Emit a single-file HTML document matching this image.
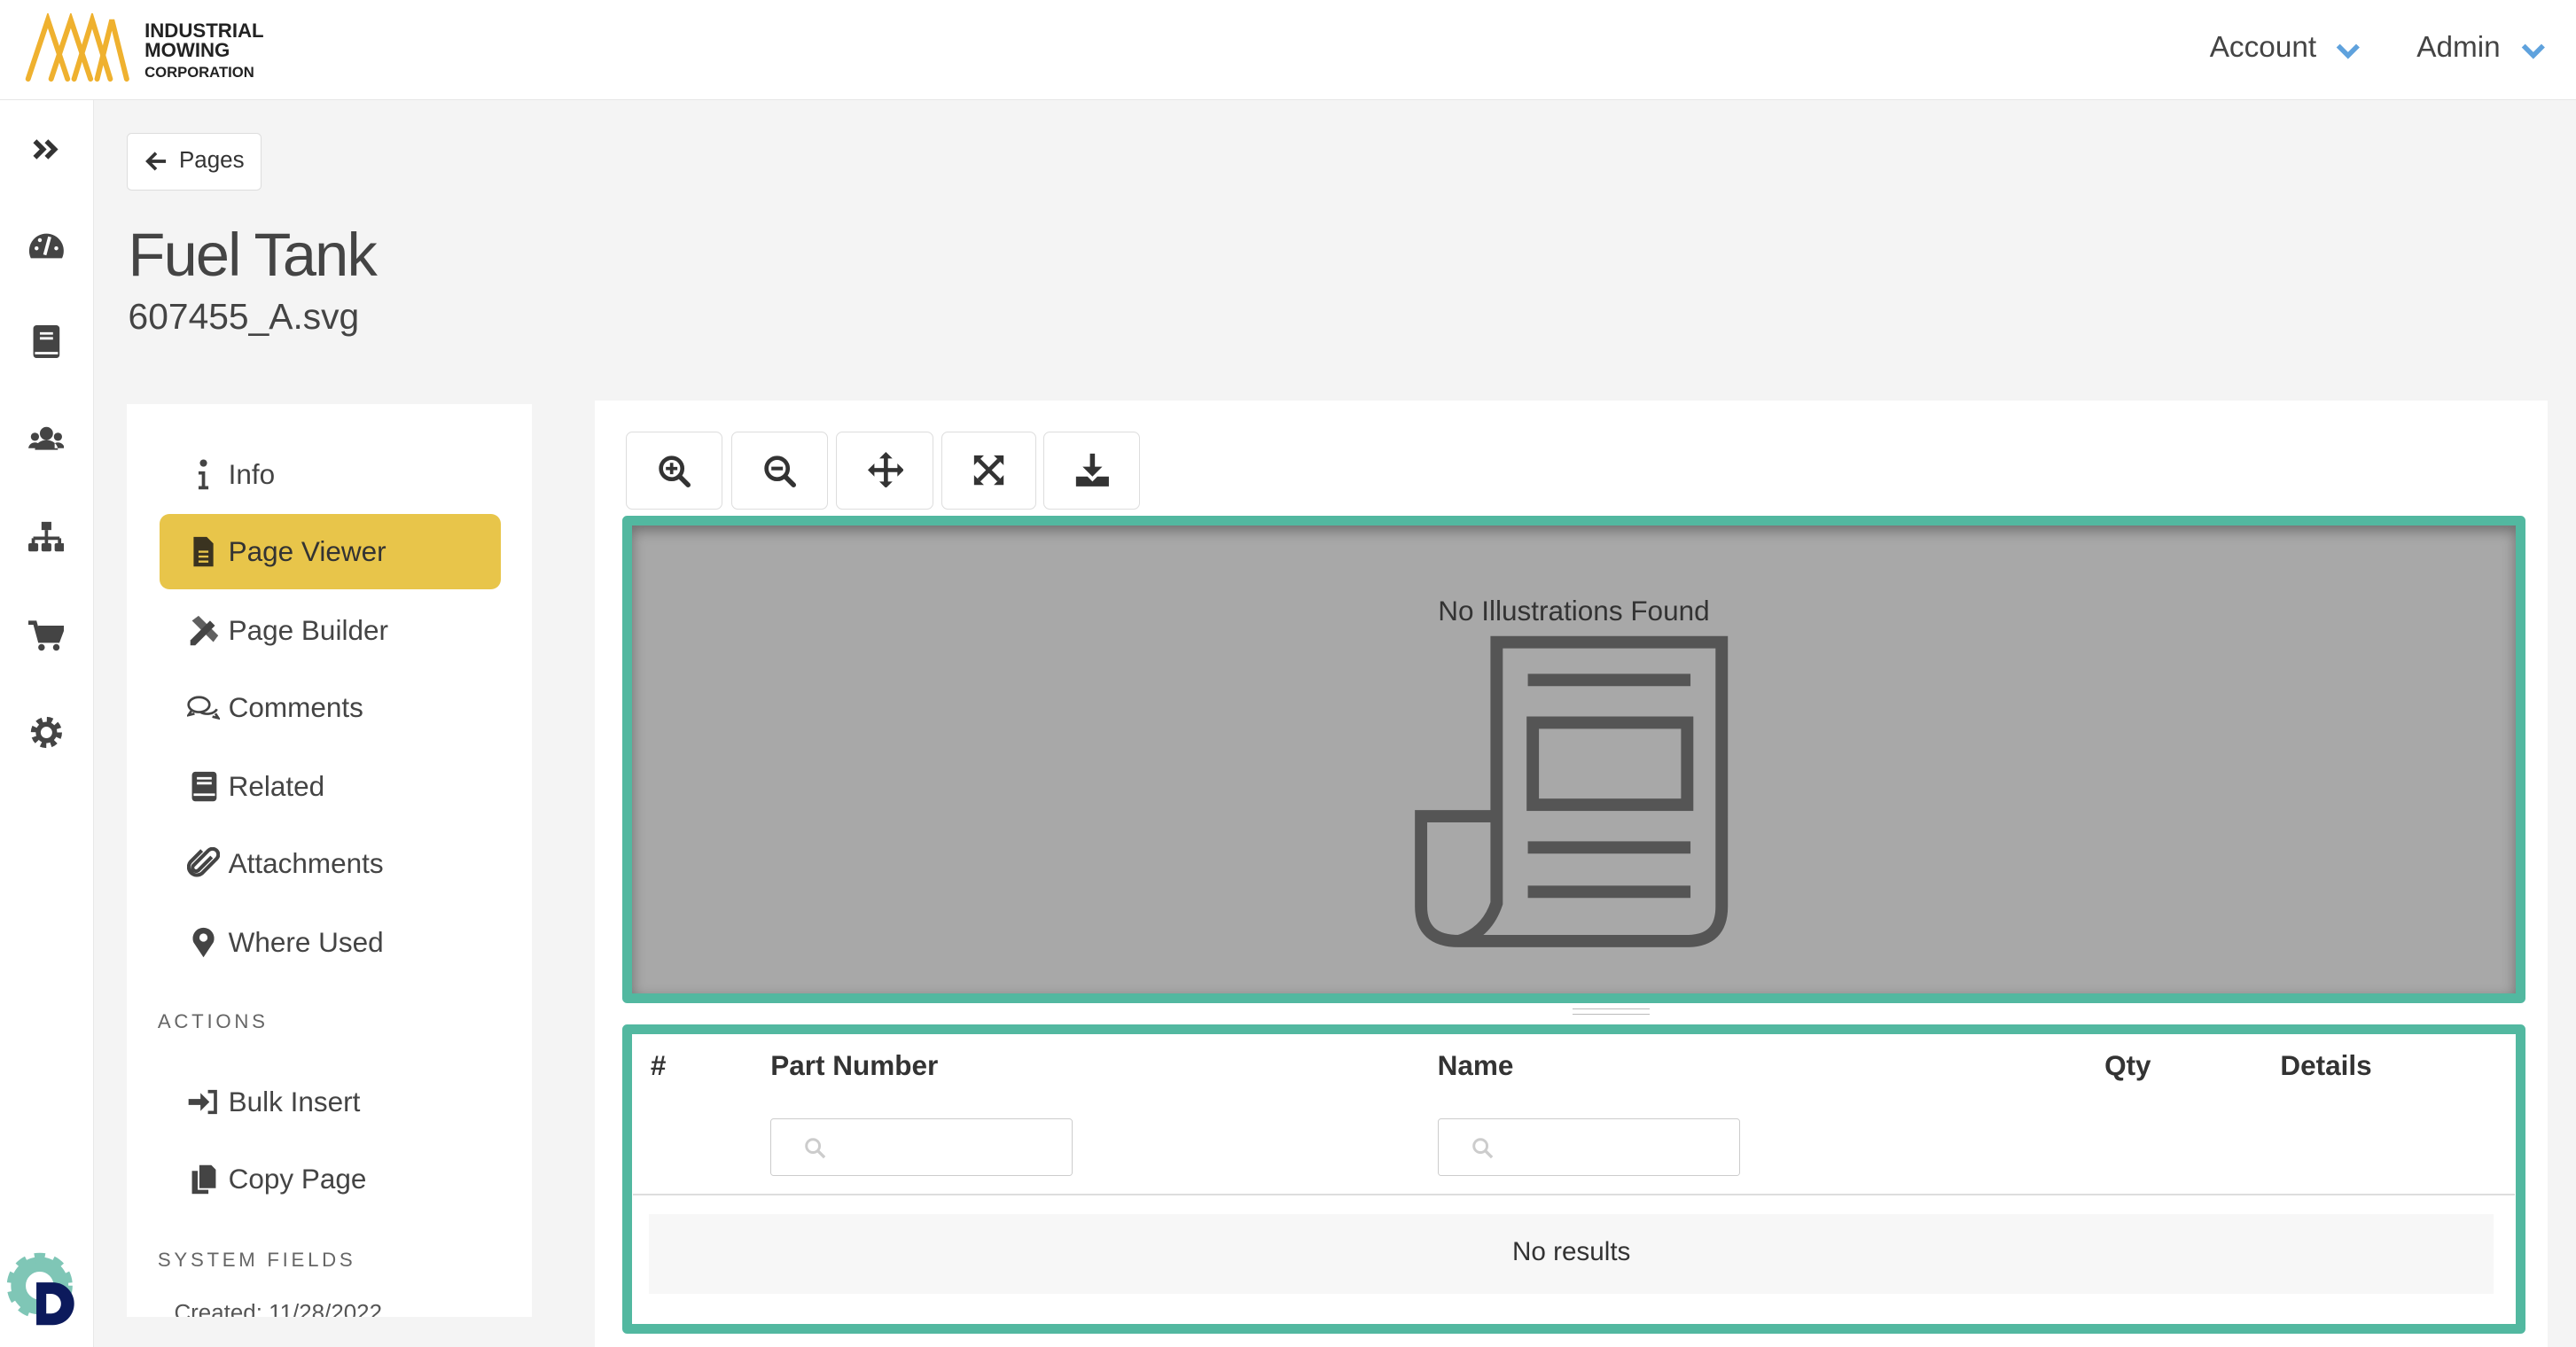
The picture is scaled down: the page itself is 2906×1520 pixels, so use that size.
<!DOCTYPE html>
<html><head><meta charset="utf-8"><style>
*{box-sizing:border-box;margin:0;padding:0}
html,body{width:2906px;height:1520px;overflow:hidden;background:#f4f4f4}
#root{zoom:1.8533;width:1568px;height:820px;position:relative;font-family:"Liberation Sans",sans-serif;color:#444;overflow:hidden}
.abs{position:absolute}
.hdr{left:0;top:0;width:1568px;height:61px;background:#fff;border-bottom:1px solid #e6e6e6}
.rail{left:0;top:61px;width:57px;height:760px;background:#fff;border-right:1px solid #e8e8e8}
.ri{position:absolute;left:17px;width:22px;height:20px}
.menu{position:absolute;left:139px;font-size:17px;color:#444}
.mi{position:absolute;left:114px;width:20px;height:20px}
.tb{position:absolute;top:263px;height:47px;border:1px solid #ddd;border-radius:4px;background:#fff}
.th{position:absolute;top:639px;font-size:17px;font-weight:bold;color:#333}
.inp{position:absolute;top:681px;width:184px;height:35px;border:1px solid #ccc;border-radius:2px;background:#fff}
</style></head><body><div id="root">
<div class="abs hdr">
 <svg class="abs" style="left:15px;top:8px" width="72" height="44" viewBox="0 0 72 44"><g stroke="#efb12f" stroke-width="3.2" fill="none" stroke-linecap="round"><path d="M2 40 L14 4 L26 40"/><path d="M16 40 L28 4 L40 40"/><path d="M30 40 L41 4 L52 40"/><path d="M44 40 L53 4 L62 40"/></g></svg>
 <div class="abs" style="left:88px;top:13px;font-size:12px;font-weight:bold;line-height:12px;color:#222">INDUSTRIAL<br>MOWING<br><span style="font-size:9px;font-weight:bold">CORPORATION</span></div>
 <div class="abs" style="left:1345px;top:19px;font-size:18px;color:#444">Account</div>
 <svg class="abs" style="left:1421px;top:25px" width="16" height="12"><path d="M2 3 L8 9 L14 3" stroke="#5fa2dd" stroke-width="3" fill="none"/></svg>
 <div class="abs" style="left:1471px;top:19px;font-size:18px;color:#444">Admin</div>
 <svg class="abs" style="left:1534px;top:25px" width="16" height="12"><path d="M2 3 L8 9 L14 3" stroke="#5fa2dd" stroke-width="3" fill="none"/></svg>
</div>
<div class="abs rail">
 <svg class="ri" style="top:20px" viewBox="0 0 22 20"><path d="M4 5 L9 10 L4 15 M11 5 L16 10 L11 15" stroke="#333" stroke-width="3" fill="none"/></svg>
 <svg class="ri" style="top:78px" viewBox="0 0 22 20"><path d="M1.5 18 A10.5 10.5 0 1 1 20.5 18 Z" fill="#444"/><path d="M10 16 L13 5" stroke="#fff" stroke-width="2"/><circle cx="5" cy="12" r="1.2" fill="#fff"/><circle cx="17" cy="12" r="1.2" fill="#fff"/><circle cx="7" cy="7" r="1.2" fill="#fff"/></svg>
 <svg class="ri" style="top:137px" viewBox="0 0 22 20"><rect x="3" y="0" width="16" height="20" rx="2" fill="#444"/><path d="M7 5h8M7 8h8" stroke="#fff" stroke-width="1.5"/><path d="M4 17h14" stroke="#fff" stroke-width="1.5"/></svg>
 <svg class="ri" style="top:197px" viewBox="0 0 22 20"><circle cx="11" cy="6" r="4" fill="#444"/><circle cx="4" cy="8" r="2.5" fill="#444"/><circle cx="18" cy="8" r="2.5" fill="#444"/><path d="M4 16a7 6 0 0 1 14 0z M0 15a4 4 0 0 1 6-3v3z M22 15a4 4 0 0 0-6-3v3z" fill="#444"/></svg>
 <svg class="ri" style="top:256px" viewBox="0 0 22 20"><rect x="8" y="1" width="6" height="5" fill="#444"/><path d="M11 6v5M3 11h16M3 11v4M11 11v4M19 11v4" stroke="#444" stroke-width="2"/><rect x="0" y="14" width="6" height="5" rx="1" fill="#444"/><rect x="8" y="14" width="6" height="5" rx="1" fill="#444"/><rect x="16" y="14" width="6" height="5" rx="1" fill="#444"/></svg>
 <svg class="ri" style="top:316px" viewBox="0 0 22 20"><path d="M0 2h4l3 11h11l3-8H6" fill="none" stroke="#444" stroke-width="2.5"/><path d="M6 5h15l-3 8H7z" fill="#444"/><circle cx="8" cy="17" r="2" fill="#444"/><circle cx="17" cy="17" r="2" fill="#444"/></svg>
 <svg class="ri" style="top:375px" viewBox="0 0 22 20"><circle cx="11" cy="10" r="7" fill="none" stroke="#444" stroke-width="5" stroke-dasharray="3 2.5"/><circle cx="11" cy="10" r="5" fill="none" stroke="#444" stroke-width="3"/></svg>
 <svg class="abs" style="left:2px;top:700px" width="50" height="50" viewBox="0 0 50 50"><circle cx="22" cy="22" r="13" fill="none" stroke="#7fc6b6" stroke-width="9"/><circle cx="22" cy="22" r="17" fill="none" stroke="#7fc6b6" stroke-width="6" stroke-dasharray="6 5"/><path d="M20 20 h10 a13 13 0 0 1 0 26 h-10 z" fill="#0c1a5c"/><path d="M26 27 h3 a6 6 0 0 1 0 12 h-3 z" fill="#fff"/></svg>
</div>
<div class="abs" style="left:77px;top:81px;width:82px;height:35px;background:#fff;border:1px solid #ddd;border-radius:3px"></div>
<svg class="abs" style="left:88px;top:91px" width="14" height="14"><path d="M13 7H2M7 2L2 7l5 5" stroke="#333" stroke-width="2" fill="none"/></svg>
<div class="abs" style="left:109px;top:90px;font-size:14px;color:#333">Pages</div>
<div class="abs" style="left:78px;top:134px;font-size:37px;color:#444;letter-spacing:-1px">Fuel Tank</div>
<div class="abs" style="left:78px;top:180px;font-size:22px;color:#444">607455_A.svg</div>

<div class="abs" style="left:77px;top:246px;width:247px;height:556px;background:#fff"></div>
<div class="abs" style="left:97px;top:313px;width:208px;height:46px;background:#e8c54a;border-radius:6px"></div>
<svg class="mi" style="top:279px" viewBox="0 0 20 20"><circle cx="10" cy="3" r="2.2" fill="#444"/><path d="M7 8h4v9h2v2H7v-2h2v-7H7z" fill="#444"/></svg>
<div class="menu" style="top:279px">Info</div>
<svg class="mi" style="top:326px" viewBox="0 0 20 20"><path d="M4 1h8l4 4v14H4z" fill="#3a3320"/><path d="M7 10h6M7 13h6M7 16h6" stroke="#e8c54a" stroke-width="1.3"/></svg>
<div class="menu" style="top:326px;color:#333">Page Viewer</div>
<svg class="mi" style="top:374px" viewBox="0 0 20 20"><path d="M2 16 L14 4 L17 7 L5 19 H2z" fill="#444"/><path d="M3 4l4-3 12 12-3 4z" fill="#444" opacity=".85"/></svg>
<div class="menu" style="top:374px">Page Builder</div>
<svg class="mi" style="top:421px" viewBox="0 0 22 20"><ellipse cx="8" cy="8" rx="7" ry="5" fill="none" stroke="#444" stroke-width="1.6"/><path d="M9 13a7 5 0 0 0 11-2" fill="none" stroke="#444" stroke-width="1.6"/><path d="M3 12l-2 3 4-1M19 14l2 3-4-1" stroke="#444" stroke-width="1.6" fill="none"/></svg>
<div class="menu" style="top:421px">Comments</div>
<svg class="mi" style="top:469px" viewBox="0 0 20 20"><rect x="3" y="1" width="15" height="18" rx="2" fill="#444"/><path d="M6 5h9M6 8h9M4 15h13" stroke="#fff" stroke-width="1.5"/></svg>
<div class="menu" style="top:469px">Related</div>
<svg class="mi" style="top:516px" viewBox="0 0 20 20"><path d="M15 6 L7 14 a2 2 0 0 1-3-3 L13 2 a3.5 3.5 0 0 1 5 5 L9 16 a5 5 0 0 1-7-7 L9 2" fill="none" stroke="#444" stroke-width="2.2"/></svg>
<div class="menu" style="top:516px">Attachments</div>
<svg class="mi" style="top:564px" viewBox="0 0 20 20"><path d="M10 19 L4 10 A6.5 6.5 0 1 1 16 10 Z" fill="#444"/><circle cx="10" cy="7" r="2.5" fill="#fff"/></svg>
<div class="menu" style="top:564px">Where Used</div>
<div class="abs" style="left:96px;top:615px;font-size:12px;letter-spacing:2px;color:#666">ACTIONS</div>
<svg class="mi" style="top:661px" viewBox="0 0 22 20"><path d="M1 8h8V4l6 6-6 6v-4H1z" fill="#444"/><path d="M14 3h5v14h-5" fill="none" stroke="#444" stroke-width="2.2"/></svg>
<div class="menu" style="top:661px">Bulk Insert</div>
<svg class="mi" style="top:708px" viewBox="0 0 20 20"><rect x="3" y="5" width="10" height="14" fill="#444"/><path d="M7 1h8l3 3v12H7z" fill="#444" stroke="#fff" stroke-width="1"/></svg>
<div class="menu" style="top:708px">Copy Page</div>
<div class="abs" style="left:96px;top:760px;font-size:12px;letter-spacing:2px;color:#666">SYSTEM FIELDS</div>
<div class="abs" style="left:77px;top:790px;width:247px;height:12px;overflow:hidden"><div style="position:absolute;left:29px;top:2px;font-size:14px;color:#555">Created: 11/28/2022</div></div>

<div class="abs" style="left:362px;top:244px;width:1189px;height:580px;background:#fff"></div>
<div class="tb" style="left:381px;width:59px"></div>
<div class="tb" style="left:445px;width:59px"></div>
<div class="tb" style="left:509px;width:59px"></div>
<div class="tb" style="left:573px;width:58px"></div>
<div class="tb" style="left:635px;width:59px"></div>
<svg class="abs" style="left:400px;top:276px" width="22" height="22" viewBox="0 0 22 22"><circle cx="9" cy="9" r="6.5" fill="none" stroke="#333" stroke-width="2.5"/><path d="M9 5.5v7M5.5 9h7" stroke="#333" stroke-width="2"/><path d="M14 14l5 5" stroke="#333" stroke-width="3" stroke-linecap="round"/></svg>
<svg class="abs" style="left:464px;top:276px" width="22" height="22" viewBox="0 0 22 22"><circle cx="9" cy="9" r="6.5" fill="none" stroke="#333" stroke-width="2.5"/><path d="M5.5 9h7" stroke="#333" stroke-width="2.2"/><path d="M14 14l5 5" stroke="#333" stroke-width="3" stroke-linecap="round"/></svg>
<svg class="abs" style="left:528px;top:275px" width="22" height="22" viewBox="0 0 22 22"><path d="M11 2v18M2 11h18" stroke="#333" stroke-width="2.5"/><path d="M11 0l-4 4h8zM11 22l-4-4h8zM0 11l4-4v8zM22 11l-4-4v8z" fill="#333"/></svg>
<svg class="abs" style="left:592px;top:276px" width="20" height="20" viewBox="0 0 20 20"><path d="M4 4l12 12M16 4L4 16" stroke="#333" stroke-width="2.5"/><path d="M1 1h6L1 7zM19 1h-6l6 6zM1 19h6l-6-6zM19 19h-6l6-6z" fill="#333"/></svg>
<svg class="abs" style="left:654px;top:275px" width="22" height="22" viewBox="0 0 22 22"><path d="M11 1v10" stroke="#333" stroke-width="3"/><path d="M5 9h12l-6 6z" fill="#333"/><path d="M1 15h7l3 3 3-3h7v6H1z" fill="#333"/></svg>

<div class="abs" style="left:379px;top:314px;width:1158px;height:297px;border:6px solid #52b8a0;background:#a8a8a8;box-shadow:inset 0 3px 8px rgba(0,0,0,.35);border-radius:3px"></div>
<div class="abs" style="left:379px;top:362px;width:1158px;text-align:center;font-size:17px;color:#333">No Illustrations Found</div>
<svg class="abs" style="left:0;top:0" width="1568" height="820"><g stroke="#555" stroke-width="7.5" fill="none"><path d="M911 497 V391 H1048 V552 Q1048 573 1027 573 H888 Q865 573 865 552 V497 H911 V550 Q905 568 888 573"/><path d="M930 414H1029M930 516H1029M930 543H1029"/><rect x="933" y="440" width="94" height="50"/></g></svg>
<div class="abs" style="left:957px;top:614px;width:47px;height:4px;border-top:1px solid #bbb;border-bottom:1px solid #bbb"></div>

<div class="abs" style="left:379px;top:624px;width:1158px;height:188px;border:6px solid #52b8a0;background:#fff;border-radius:3px"></div>
<div class="th" style="left:396px">#</div>
<div class="th" style="left:469px">Part Number</div>
<div class="th" style="left:875px">Name</div>
<div class="th" style="left:1281px">Qty</div>
<div class="th" style="left:1388px">Details</div>
<div class="inp" style="left:469px"></div>
<div class="inp" style="left:875px"></div>
<svg class="abs" style="left:489px;top:692px" width="14" height="14"><circle cx="6" cy="6" r="4" fill="none" stroke="#ccc" stroke-width="1.6"/><path d="M9 9l4 4" stroke="#ccc" stroke-width="1.8"/></svg>
<svg class="abs" style="left:895px;top:692px" width="14" height="14"><circle cx="6" cy="6" r="4" fill="none" stroke="#ccc" stroke-width="1.6"/><path d="M9 9l4 4" stroke="#ccc" stroke-width="1.8"/></svg>
<div class="abs" style="left:385px;top:727px;width:1146px;height:1px;background:#ddd"></div>
<div class="abs" style="left:395px;top:739px;width:1123px;height:49px;background:#f7f7f7"></div>
<div class="abs" style="left:395px;top:753px;width:1123px;text-align:center;font-size:16px;color:#333">No results</div>
</div></body></html>
